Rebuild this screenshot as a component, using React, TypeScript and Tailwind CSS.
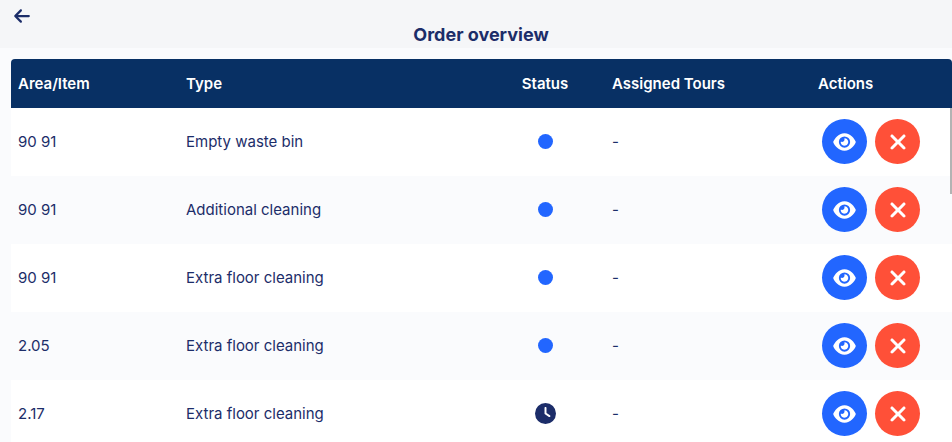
import React from "react";
import { FaArrowLeft, FaClock, FaEye, FaXmark } from "react-icons/fa6";

type Order = {
  area: string;
  type: string;
  status: "open" | "waiting";
  tours: string;
};

const orders: Order[] = [
  { area: "90 91", type: "Empty waste bin", status: "open", tours: "-" },
  { area: "90 91", type: "Additional cleaning", status: "open", tours: "-" },
  { area: "90 91", type: "Extra floor cleaning", status: "open", tours: "-" },
  { area: "2.05", type: "Extra floor cleaning", status: "open", tours: "-" },
  { area: "2.17", type: "Extra floor cleaning", status: "waiting", tours: "-" },
];

const StatusIcon: React.FC<{ status: Order["status"] }> = ({ status }) => {
  if (status === "waiting") {
    return (
      <FaClock
        role="img"
        aria-label="Waiting"
        className="mx-auto size-[21px] text-[#1c2d69]"
      />
    );
  }
  return (
    <span
      role="img"
      aria-label="Open"
      className="mx-auto block size-[15px] rounded-full bg-[#2266ff]"
    />
  );
};

const App: React.FC = () => {
  return (
    <div className="flex h-screen flex-col overflow-hidden bg-[#fafbfd] font-[Inter,sans-serif] text-[#1c2d69]">
      {/* Page header */}
      <header className="flex h-12 shrink-0 flex-col bg-[#f5f6f8] pr-1 pl-[14px]">
        <button
          type="button"
          aria-label="Back"
          className="flex h-6 w-4 items-center justify-center pt-2"
        >
          <FaArrowLeft className="h-[18px] w-4 shrink-0" />
        </button>
        <h1 className="-mt-1 text-center text-[18px] leading-[30px] font-bold">
          Order overview
        </h1>
      </header>

      {/* Orders */}
      <main className="relative mt-[11px] ml-[11px] min-h-0 flex-1 overflow-hidden">
        <table className="w-full table-fixed text-left text-[15px] leading-6">
          <thead className="text-white">
            <tr className="h-[49px]">
              <th className="w-[168px] rounded-tl bg-[#083064] pl-[7px] font-semibold">
                Area/Item
              </th>
              <th className="bg-[#083064] pl-[7px] font-semibold">Type</th>
              <th className="w-[120px] bg-[#083064] text-center font-semibold">
                Status
              </th>
              <th className="w-[206px] bg-[#083064] pl-[7px] font-semibold">
                Assigned Tours
              </th>
              <th className="w-[141px] rounded-tr bg-[#083064] pl-[7px] font-semibold">
                Actions
              </th>
            </tr>
          </thead>
          <tbody>
            {orders.map((order, index) => (
              <tr key={index} className="h-[68px] bg-white even:bg-[#fafbfd]">
                <td className="pl-[7px]">{order.area}</td>
                <td className="pl-[7px]">{order.type}</td>
                <td className="pb-px">
                  <StatusIcon status={order.status} />
                </td>
                <td className="pl-[7px]">{order.tours}</td>
                <td className="pb-px pl-[11px]">
                  <div className="flex gap-2">
                    <button
                      type="button"
                      aria-label="View order"
                      className="flex size-[45px] items-center justify-center rounded-full bg-[#2266ff] text-white"
                    >
                      <FaEye className="h-5 w-[23px]" />
                    </button>
                    <button
                      type="button"
                      aria-label="Cancel order"
                      className="flex size-[45px] items-center justify-center rounded-full bg-[#ff5038] text-white"
                    >
                      <FaXmark className="size-6" />
                    </button>
                  </div>
                </td>
              </tr>
            ))}
          </tbody>
        </table>

        {/* Scroll thumb */}
        <div className="absolute top-[49px] right-0 h-[86px] w-0.5 bg-[#b3b3b3]" />
      </main>
    </div>
  );
};

export default App;
